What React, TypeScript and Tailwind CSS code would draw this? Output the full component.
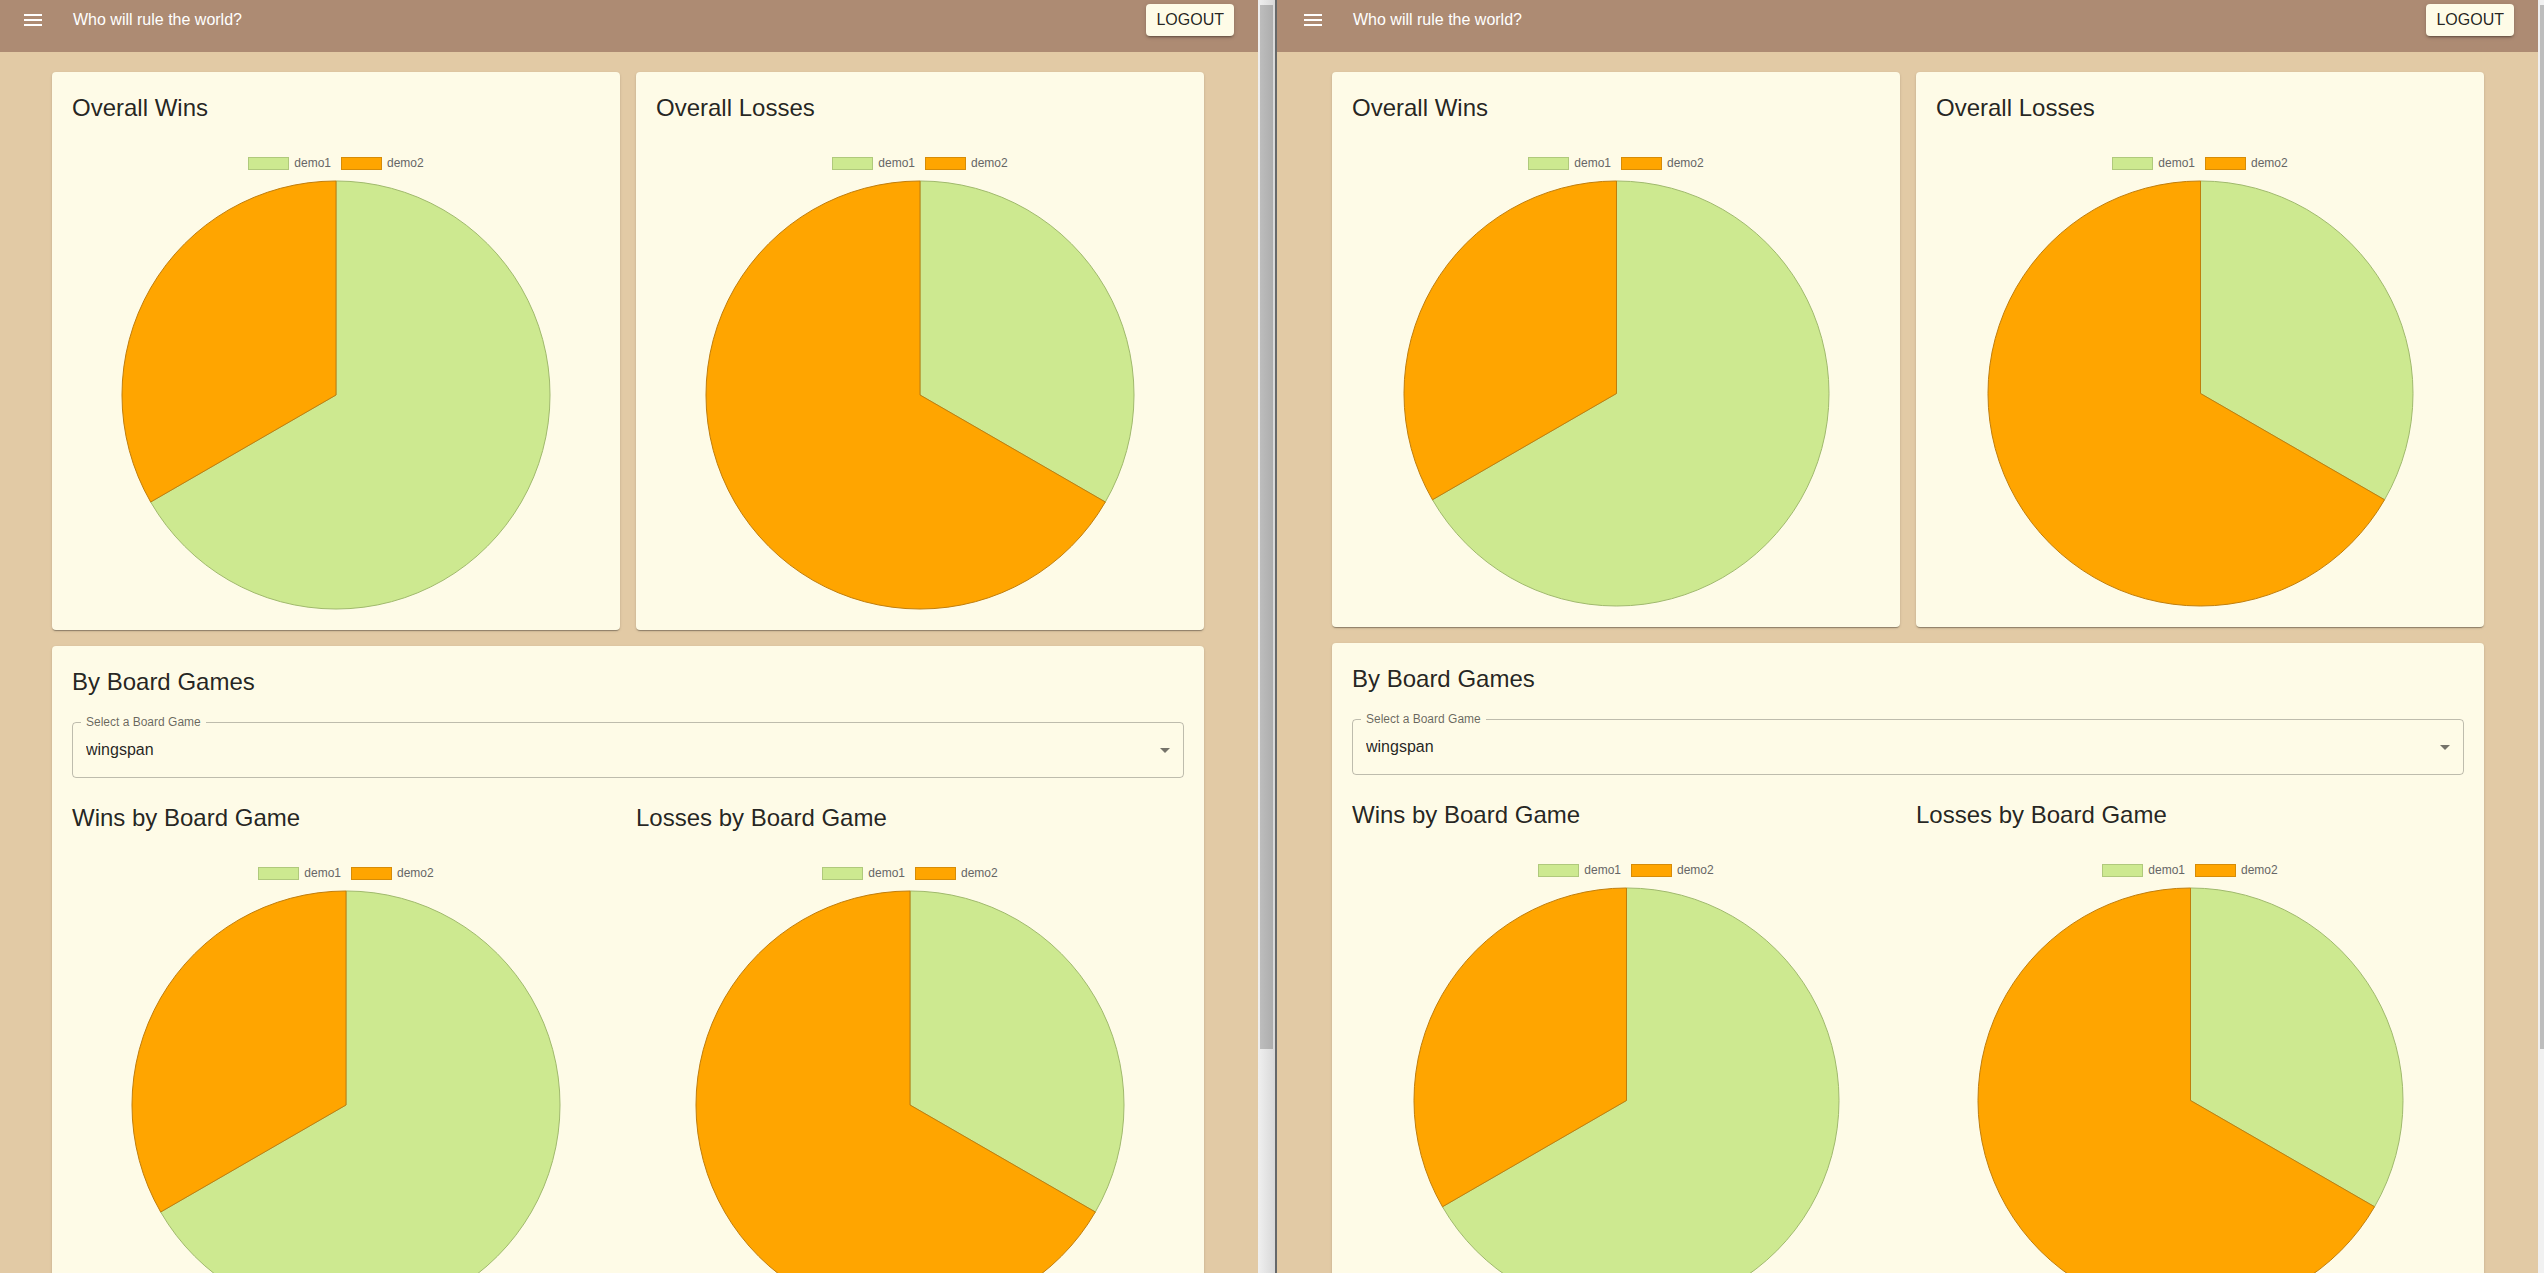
import React, { useId } from "react";

type Slice = { label: string; value: number; shape: string; swatch: string };

const player1 = {
  label: "demo1",
  shape: "fill-[#cde990] stroke-[#9fb86c]",
  swatch: "bg-[#cde990] border-[#b0c97c]",
};
const player2 = {
  label: "demo2",
  shape: "fill-[#ffa500] stroke-[#bf7d0c]",
  swatch: "bg-[#ffa500] border-[#d68c08]",
};

const wins: Slice[] = [
  { ...player1, value: 2 },
  { ...player2, value: 1 },
];
const losses: Slice[] = [
  { ...player1, value: 1 },
  { ...player2, value: 2 },
];

function slicePath(start: number, end: number) {
  const r = 215;
  const c = 215;
  const point = (t: number) => {
    const a = t * 2 * Math.PI;
    return `${c + r * Math.sin(a)} ${c - r * Math.cos(a)}`;
  };
  const large = end - start > 0.5 ? 1 : 0;
  return `M${c} ${c}L${point(start)}A${r} ${r} 0 ${large} 1 ${point(end)}Z`;
}

function PieChart({ title, data, size }: { title: string; data: Slice[]; size: string }) {
  const total = data.reduce((sum, s) => sum + s.value, 0);
  let start = 0;
  const slices = data.map((s) => {
    const end = start + s.value / total;
    const d = slicePath(start, end);
    start = end;
    return { ...s, d };
  });
  return (
    <div>
      <h2 className="text-2xl leading-8">{title}</h2>
      <ul className="mt-[31px] flex h-4 items-center justify-center gap-2.5 text-xs text-[#666]">
        {data.map((s) => (
          <li key={s.label} className="flex items-center gap-[5px]">
            <span className={`h-[13px] w-[41px] border ${s.swatch}`} />
            {s.label}
          </li>
        ))}
      </ul>
      <svg
        viewBox="0 0 432 432"
        className={`mx-auto mt-[9px] block ${size}`}
        role="img"
        aria-label={title}
      >
        <g transform="translate(1 1)">
          {slices.map((s) => (
            <path key={s.label} d={s.d} className={s.shape} strokeWidth="1" strokeLinejoin="round" />
          ))}
        </g>
      </svg>
    </div>
  );
}

function Card({ children }: { children: React.ReactNode }) {
  return (
    <section className="rounded bg-[#fefbe7] p-5 shadow-[0_2px_1px_-1px_rgba(0,0,0,0.2),0_1px_1px_rgba(0,0,0,0.14),0_1px_3px_rgba(0,0,0,0.12)]">
      {children}
    </section>
  );
}

function GameSelect() {
  const id = useId();
  return (
    <div className="relative my-6 h-14">
      <label
        htmlFor={id}
        className="absolute -top-2 left-[9px] bg-[#fefbe7] px-[5px] text-xs leading-4 text-black/60"
      >
        Select a Board Game
      </label>
      <select
        id={id}
        defaultValue="wingspan"
        className="h-full w-full appearance-none rounded border border-black/25 bg-transparent px-[13px] text-base text-black/87"
      >
        <option>wingspan</option>
      </select>
      <svg viewBox="0 0 24 24" className="pointer-events-none absolute top-4 right-[7px] size-6 fill-black/54">
        <path d="M7 10l5 5 5-5z" />
      </svg>
    </div>
  );
}

function Dashboard({ pane, inset, size }: { pane: string; inset: string; size: string }) {
  return (
    <div className={`h-screen min-w-0 overflow-hidden bg-[#e2caa5] ${pane}`}>
      <header className={`flex items-center bg-[#ad8b73] pt-1 pr-6 pb-4 text-white ${inset}`}>
        <button aria-label="Menu" className="ml-[21px]">
          <svg viewBox="0 0 24 24" className="size-6 fill-current">
            <path d="M3 18h18v-2H3v2zm0-5h18v-2H3v2zm0-7v2h18V6H3z" />
          </svg>
        </button>
        <h1 className="ml-7 text-base">Who will rule the world?</h1>
        <button className="ml-auto h-8 rounded bg-[#fefbe7] px-2.5 text-base text-black/87 shadow-[0_3px_1px_-2px_rgba(0,0,0,0.2),0_2px_2px_rgba(0,0,0,0.14),0_1px_5px_rgba(0,0,0,0.12)]">
          LOGOUT
        </button>
      </header>
      <main className={`pt-5 pr-0.5 ${inset}`}>
        <div className="mx-auto flex max-w-[1152px] flex-col gap-4">
          <div className="grid grid-cols-2 gap-4">
            <Card>
              <PieChart title="Overall Wins" data={wins} size={size} />
            </Card>
            <Card>
              <PieChart title="Overall Losses" data={losses} size={size} />
            </Card>
          </div>
          <Card>
            <h2 className="text-2xl leading-8">By Board Games</h2>
            <GameSelect />
            <div className="grid grid-cols-2 gap-4">
              <PieChart title="Wins by Board Game" data={wins} size={size} />
              <PieChart title="Losses by Board Game" data={losses} size={size} />
            </div>
          </Card>
        </div>
      </main>
    </div>
  );
}

export default function App() {
  return (
    <div className="flex h-screen overflow-hidden font-['Liberation_Sans',Arial,sans-serif] text-black/87">
      <Dashboard pane="grow basis-0" inset="pl-0" size="w-[430px]" />
      <div className="w-[17px] shrink-0 bg-linear-to-r from-[#f0f0f0] to-[#d8d8d8] px-0.5 pt-[5px]">
        <div className="h-14/17 w-[13px] bg-linear-to-r from-[#bdbdbd] to-[#adadad]" />
      </div>
      <div className="w-0.5 shrink-0 bg-[#666869]" />
      <Dashboard pane="grow basis-[3px]" inset="pl-[3px]" size="w-[427px]" />
      <div className="w-1.5 shrink-0 bg-[#f1f1f1] pt-[5px] pl-0.5">
        <div className="h-14/17 bg-[#bdbdbd]" />
      </div>
    </div>
  );
}
